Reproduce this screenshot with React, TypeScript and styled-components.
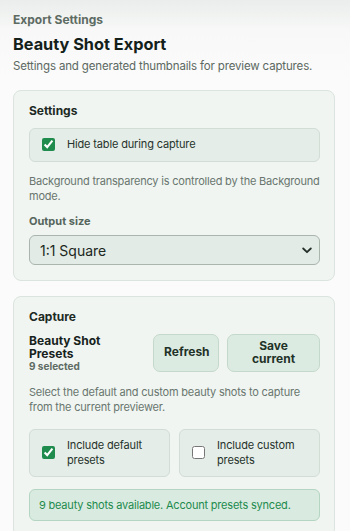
import React from "react";
import styled, { createGlobalStyle } from "styled-components";

const Global = createGlobalStyle`
  html, body { margin: 0; padding: 0; }
  body {
    font-family: Inter, "Noto Sans", "Liberation Sans", sans-serif;
    background: linear-gradient(180deg, #eaedeb 0px, #f7f8f7 30px, #fafbfa 80px, #fafbfa 100%);
    min-height: 531px;
    -webkit-font-smoothing: antialiased;
  }
  * { box-sizing: border-box; }
`;

const Page = styled.div`
  padding: 13px 15px 0 13px;
  display: flex;
  flex-direction: column;
`;

const Eyebrow = styled.div`
  font-size: 12px;
  line-height: 14px;
  font-weight: 700;
  color: #5d6b63;
`;

const Title = styled.h1`
  margin: 7px 0 0;
  font-size: 16.3px;
  line-height: 20px;
  font-weight: 700;
  color: #14201a;
`;

const Subtitle = styled.p`
  margin: 4.5px 0 0;
  font-size: 11.5px;
  line-height: 15px;
  letter-spacing: -0.15px;
  color: #5c6862;
`;

const Card = styled.section<{ $top: number }>`
  margin-top: ${(p) => p.$top}px;
  background: #f0f5f2;
  border: 1px solid #dbe4de;
  border-radius: 8px;
  padding: 12px 14px 15px 15px;
  display: flex;
  flex-direction: column;
`;

const CardTitle = styled.h2`
  margin: 0;
  font-size: 12px;
  line-height: 16px;
  font-weight: 700;
  color: #1d2a23;
`;

const CheckRow = styled.label<{ $top: number }>`
  margin-top: ${(p) => p.$top}px;
  display: flex;
  align-items: center;
  gap: 12px;
  min-height: 34px;
  padding: 8px 12px;
  background: #e5ede8;
  border: 1px solid #d2ddd6;
  border-radius: 6px;
  font-size: 11px;
  line-height: 15px;
  letter-spacing: -0.15px;
  color: #26332c;
`;

const Check = styled.input`
  width: 13px;
  height: 13px;
  margin: 0;
  flex: none;
  accent-color: #1f8c4e;
`;

const Help = styled.p<{ $top: number }>`
  margin: ${(p) => p.$top}px 0 0;
  font-size: 11px;
  line-height: 15px;
  letter-spacing: -0.2px;
  color: #69756e;
`;

const FieldLabel = styled.div`
  margin-top: 10px;
  font-size: 11px;
  line-height: 15px;
  font-weight: 700;
  color: #56655c;
`;

const Select = styled.select`
  margin-top: 6px;
  width: 100%;
  height: 30px;
  padding: 0 8px 0 10px;
  font-family: Inter, "Noto Sans", "Liberation Sans", sans-serif;
  font-size: 14px;
  color: #1c2721;
  background: #e3ebe6;
  border: 1px solid #a9b5ad;
  border-radius: 6px;
  appearance: none;
  background-image: url("data:image/svg+xml,%3Csvg xmlns='http://www.w3.org/2000/svg' width='10' height='7' viewBox='0 0 10 7'%3E%3Cpath d='M1.2 1.5 5 5.2 8.8 1.5' fill='none' stroke='%23243029' stroke-width='1.8' stroke-linecap='round' stroke-linejoin='round'/%3E%3C/svg%3E");
  background-repeat: no-repeat;
  background-position: right 7px center;
`;

const PresetRow = styled.div`
  margin-top: 9px;
  display: flex;
  align-items: stretch;
  gap: 8px;
`;

const PresetInfo = styled.div`
  flex: 1;
  min-width: 0;
  display: flex;
  flex-direction: column;
  justify-content: center;
`;

const PresetName = styled.div`
  font-size: 12px;
  line-height: 13px;
  font-weight: 700;
  color: #16221b;
`;

const PresetCount = styled.div`
  font-size: 10px;
  line-height: 12px;
  font-weight: 700;
  color: #5e6b63;
`;

const Button = styled.button<{ $w: number }>`
  width: ${(p) => p.$w}px;
  flex: none;
  min-height: 38px;
  padding: 0 10px;
  background: #dcebe2;
  border: 1px solid #c4d8cb;
  border-radius: 7px;
  font-family: Inter, "Noto Sans", "Liberation Sans", sans-serif;
  font-size: 12px;
  line-height: 12.5px;
  font-weight: 700;
  color: #1f3228;
`;

const ChoiceGrid = styled.div`
  margin-top: 14px;
  display: grid;
  grid-template-columns: 1fr 1fr;
  gap: 9px;
`;

const Choice = styled.label`
  display: flex;
  align-items: center;
  gap: 12px;
  min-height: 47px;
  padding: 8px 12px;
  background: #e5ede8;
  border: 1px solid #d2ddd6;
  border-radius: 6px;
  font-size: 11px;
  line-height: 15px;
  letter-spacing: -0.15px;
  color: #26332c;
`;

const Status = styled.div`
  margin-top: 12.5px;
  min-height: 32px;
  display: flex;
  align-items: center;
  padding: 0 9px;
  background: #d9ebe0;
  border: 1px solid #b4d5c1;
  border-radius: 6px;
  font-size: 11px;
  line-height: 15px;
  letter-spacing: -0.2px;
  color: #1d8a4e;
`;

export default function App() {
  return (
    <>
      <Global />
      <Page>
        <Eyebrow>Export Settings</Eyebrow>
        <Title>Beauty Shot Export</Title>
        <Subtitle>Settings and generated thumbnails for preview captures.</Subtitle>

        <Card $top={16}>
          <CardTitle>Settings</CardTitle>
          <CheckRow $top={9}>
            <Check type="checkbox" defaultChecked />
            Hide table during capture
          </CheckRow>
          <Help $top={12.5}>Background transparency is controlled by the Background mode.</Help>
          <FieldLabel>Output size</FieldLabel>
          <Select defaultValue="1:1">
            <option value="1:1">1:1 Square</option>
            <option value="4:3">4:3 Landscape</option>
            <option value="16:9">16:9 Wide</option>
          </Select>
        </Card>

        <Card $top={14.5}>
          <CardTitle>Capture</CardTitle>
          <PresetRow>
            <PresetInfo>
              <PresetName>Beauty Shot Presets</PresetName>
              <PresetCount>9 selected</PresetCount>
            </PresetInfo>
            <Button $w={66}>Refresh</Button>
            <Button $w={93}>Save current</Button>
          </PresetRow>
          <Help $top={13}>Select the default and custom beauty shots to capture from the current previewer.</Help>
          <ChoiceGrid>
            <Choice>
              <Check type="checkbox" defaultChecked />
              Include default presets
            </Choice>
            <Choice>
              <Check type="checkbox" />
              Include custom presets
            </Choice>
          </ChoiceGrid>
          <Status>9 beauty shots available. Account presets synced.</Status>
        </Card>
      </Page>
    </>
  );
}
